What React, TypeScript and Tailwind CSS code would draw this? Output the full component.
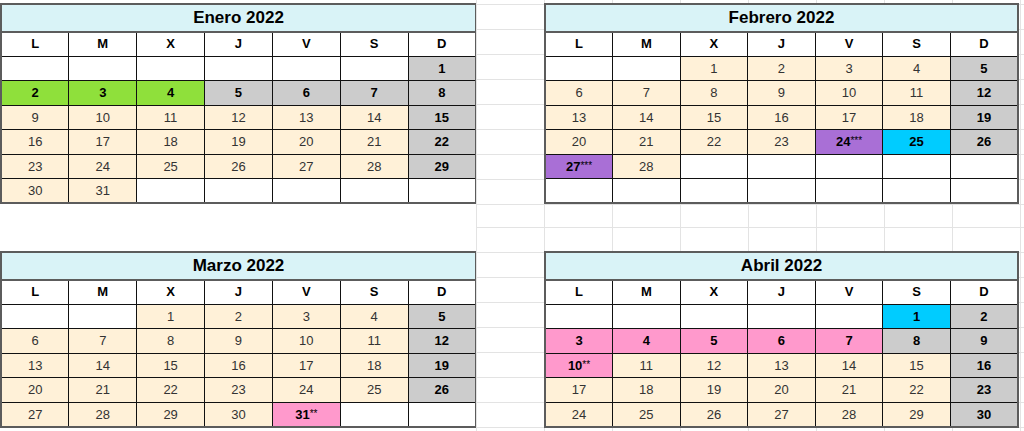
import React from 'react';

type Cell = [string, string];

const fills: Record<string, string> = {
  w: 'bg-white',
  y: 'bg-[#fff1d8]',
  g: 'bg-[#cccccc]',
  v: 'bg-[#8fe03b]',
  p: 'bg-[#ff99cc]',
  m: 'bg-[#a96fd6]',
  c: 'bg-[#00ccff]',
};

const days = ['L', 'M', 'X', 'J', 'V', 'S', 'D'];

// "n:k" -> [número, color]
const row = (s: string): Cell[] =>
  s.split(' ').map((x) => {
    const [n, k] = x.split(':');
    return [n === '_' ? '' : n, k];
  });

const months = [
  {
    title: 'Enero 2022',
    weeks: [
      row('_:w _:w _:w _:w _:w _:w 1:g'),
      row('2:v 3:v 4:v 5:g 6:g 7:g 8:g'),
      row('9:y 10:y 11:y 12:y 13:y 14:y 15:g'),
      row('16:y 17:y 18:y 19:y 20:y 21:y 22:g'),
      row('23:y 24:y 25:y 26:y 27:y 28:y 29:g'),
      row('30:y 31:y _:w _:w _:w _:w _:w'),
    ],
  },
  {
    title: 'Febrero 2022',
    weeks: [
      row('_:w _:w 1:y 2:y 3:y 4:y 5:g'),
      row('6:y 7:y 8:y 9:y 10:y 11:y 12:g'),
      row('13:y 14:y 15:y 16:y 17:y 18:y 19:g'),
      row('20:y 21:y 22:y 23:y 24***:m 25:c 26:g'),
      row('27***:m 28:y _:w _:w _:w _:w _:w'),
      row('_:w _:w _:w _:w _:w _:w _:w'),
    ],
  },
  {
    title: 'Marzo 2022',
    weeks: [
      row('_:w _:w 1:y 2:y 3:y 4:y 5:g'),
      row('6:y 7:y 8:y 9:y 10:y 11:y 12:g'),
      row('13:y 14:y 15:y 16:y 17:y 18:y 19:g'),
      row('20:y 21:y 22:y 23:y 24:y 25:y 26:g'),
      row('27:y 28:y 29:y 30:y 31**:p _:w _:w'),
    ],
  },
  {
    title: 'Abril 2022',
    weeks: [
      row('_:w _:w _:w _:w _:w 1:c 2:g'),
      row('3:p 4:p 5:p 6:p 7:p 8:g 9:g'),
      row('10**:p 11:y 12:y 13:y 14:y 15:y 16:g'),
      row('17:y 18:y 19:y 20:y 21:y 22:y 23:g'),
      row('24:y 25:y 26:y 27:y 28:y 29:y 30:g'),
    ],
  },
];

const DayCell = ({ cell }: { cell: Cell }) => {
  const [text, k] = cell;
  const bold = k !== 'y' && k !== 'w';
  const num = text.replace(/\*/g, '');
  const stars = text.slice(num.length);
  return (
    <td
      className={`h-[24.5px] border border-[#111] p-0 text-center text-[13px] leading-none ${fills[k]} ${
        bold ? 'font-bold text-black' : 'text-[#333]'
      }`}
    >
      {num}
      {stars && <span className="relative -top-[2px] text-[10px] font-normal">{stars}</span>}
    </td>
  );
};

const MonthTable = ({ month, width }: { month: (typeof months)[number]; width: string }) => (
  <table className={`table-fixed border-collapse border-2 border-[#5c5c5c] bg-white ${width}`}>
    <tbody>
      <tr>
        <td colSpan={7} className="h-[24.5px] border-2 border-[#5c5c5c] bg-[#d9f3f7] p-0 text-center text-[17px] font-bold text-black">
          {month.title}
        </td>
      </tr>
      <tr>
        {days.map((d) => (
          <td key={d} className="h-[24.5px] border border-[#111] p-0 text-center text-[13px] font-bold text-black">
            {d}
          </td>
        ))}
      </tr>
      {month.weeks.map((w, i) => (
        <tr key={i}>
          {w.map((c, j) => (
            <DayCell key={j} cell={c} />
          ))}
        </tr>
      ))}
    </tbody>
  </table>
);

const grid =
  'bg-[linear-gradient(to_right,#e3e3e3_1px,transparent_1px),linear-gradient(to_bottom,#e3e3e3_1px,transparent_1px)] bg-[size:68px_25px]';

export default function App() {
  return (
    <div className="flex h-[431px] w-[1024px] overflow-hidden bg-white font-['Liberation_Sans',Arial,sans-serif]">
      {/* columna izquierda */}
      <div className="flex w-[476px] shrink-0 flex-col">
        <div className="h-[251px] pt-[3px]">
          <MonthTable month={months[0]} width="w-[477px]" />
        </div>
        <div>
          <MonthTable month={months[2]} width="w-[477px]" />
        </div>
      </div>

      {/* columna derecha con rejilla */}
      <div className="flex flex-1 flex-col">
        <div className={`h-[227px] pl-[68px] pt-[3px] ${grid} bg-[position:0_4px]`}>
          <MonthTable month={months[1]} width="w-[475px]" />
        </div>
        <div className={`flex-1 pl-[68px] pt-[24px] ${grid} bg-[position:0_0]`}>
          <MonthTable month={months[3]} width="w-[475px]" />
        </div>
      </div>
    </div>
  );
}
